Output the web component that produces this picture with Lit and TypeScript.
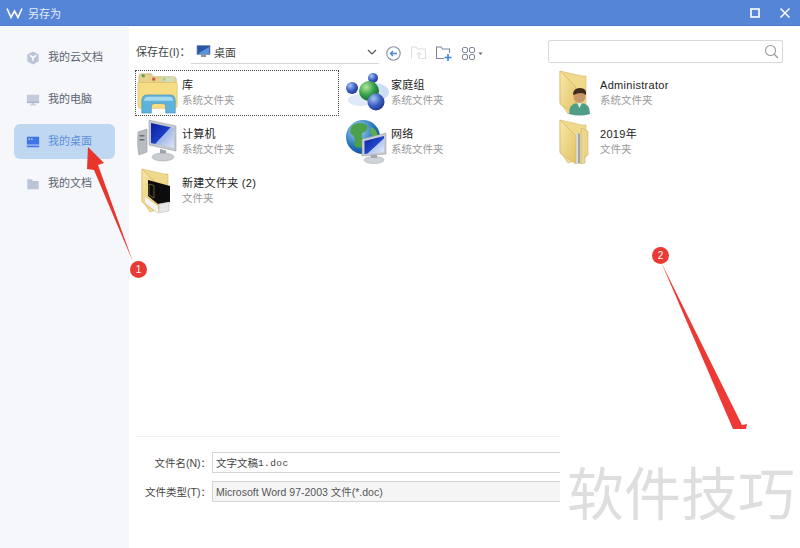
import { LitElement, html, css, svg } from "lit";
import { customElement } from "lit/decorators.js";

const folderBase = (inner: unknown) => svg`
  <svg class="ico" viewBox="0 0 46 46">
    <defs><linearGradient id="fg" x1="0" y1="0" x2="1" y2="1"><stop offset="0" stop-color="#f8e8a8"/><stop offset="1" stop-color="#e2c268"/></linearGradient></defs>
    <path d="M6 1 L28 6 H32 V38 L14 44 L6 32 Z" fill="#f0d98c" stroke="#d3b868" stroke-width=".6"/>
    <path d="M6 1 L22 17 V45 L6 34 Z" fill="url(#fg)" stroke="#cdb062" stroke-width=".6"/>
    ${inner}
  </svg>`;

const icons: Record<string, unknown> = {
  lib: svg`<svg class="ico" viewBox="0 0 46 46">
    <path d="M2 6 Q2 3 5 3 H15 L17 6 H38 Q41 6 41 9 V14 H2 Z" fill="#e6d28c" stroke="#b9a55e" stroke-width=".6"/>
    <rect x="5" y="3.500" width="3" height="3" fill="#5d9b52"/><rect x="16" y="7" width="3" height="3" fill="#d2503c"/><rect x="27" y="7" width="3" height="3" fill="#5d9b52"/>
    <rect x="26" y="6" width="14" height="6" rx="1" fill="#cfe0c4" opacity=".7"/>
    <path d="M1 12 H41 Q42 12 42 14 V36 Q42 39 39 39 H4 Q1 39 1 36 Z" fill="#f6dc82" stroke="#d4b660" stroke-width=".6"/>
    <path d="M5 44 V31 Q5 25 11 25 H35 Q40 25 40 31 V44 H30 V37 Q30 34 27 34 H18 Q15 34 15 37 V44 Z" fill="#5db3dc" stroke="#3f8fb8" stroke-width=".6"/>
    <path d="M7 33 Q7 27 12 27 H33 Q38 27 38 31 H7 Z" fill="#a5d9ee"/>
  </svg>`,
  homegroup: svg`<svg class="ico" viewBox="0 0 46 46">
    <defs>
      <radialGradient id="gb" cx=".35" cy=".3" r=".8"><stop offset="0" stop-color="#a8c4f0"/><stop offset=".55" stop-color="#3a5cc0"/><stop offset="1" stop-color="#1c2f80"/></radialGradient>
      <radialGradient id="gg" cx=".35" cy=".3" r=".8"><stop offset="0" stop-color="#b0e89a"/><stop offset=".55" stop-color="#2f9a46"/><stop offset="1" stop-color="#0e5c2a"/></radialGradient>
    </defs>
    <ellipse cx="30" cy="22" rx="14" ry="9" fill="#cfdcf5"/>
    <ellipse cx="16" cy="30" rx="13" ry="6" fill="#dfe8f8"/>
    <circle cx="28" cy="8" r="5" fill="url(#gb)"/>
    <circle cx="7" cy="18" r="6" fill="url(#gb)"/>
    <circle cx="24" cy="21" r="10" fill="url(#gg)"/>
    <circle cx="31" cy="32" r="8.500" fill="url(#gb)"/>
  </svg>`,
  user: folderBase(svg`
    <path d="M15 44 Q15 33 24 33 H27 Q36 33 36 44 Q26 47 15 44 Z" fill="#4f9d86"/>
    <path d="M23 33 L25.500 38 L28 33 Z" fill="#d9efe4"/>
    <ellipse cx="25.500" cy="26" rx="6" ry="7" fill="#c9966a"/>
    <path d="M19 25 Q19 18 26 18 Q33 18 32 25 Q28 21 19 25 Z" fill="#3d2a1c"/>`),
  computer: svg`<svg class="ico" viewBox="0 0 46 46">
    <defs><linearGradient id="sc" x1="0" y1="0" x2="1" y2="1"><stop offset="0" stop-color="#0a1f9c"/><stop offset=".5" stop-color="#1c3fc6"/><stop offset=".52" stop-color="#9db6e6"/><stop offset="1" stop-color="#dfe8f8"/></linearGradient></defs>
    <path d="M2 13 L11 10 V33 L3 36 Q1 30 2 13 Z" fill="#b8bcc2" stroke="#8b8f96" stroke-width=".5"/>
    <rect x="3.500" y="16" width="5" height="1.500" fill="#6b7077"/><rect x="3.500" y="20" width="5" height="1.500" fill="#6b7077"/>
    <path d="M13 1 L40 7 V32 L13 26 Z" fill="#c4c9d0" stroke="#8f949c" stroke-width=".5"/>
    <path d="M15 4 L38 9 V29 L15 24 Z" fill="url(#sc)"/>
    <path d="M24 30 L30 31.500 V36 H24 Z" fill="#9ea3aa"/>
    <ellipse cx="27" cy="38" rx="11" ry="4" fill="#c9cdd2" stroke="#9a9ea5" stroke-width=".5"/>
  </svg>`,
  network: svg`<svg class="ico" viewBox="0 0 46 46">
    <defs>
      <radialGradient id="gl" cx=".35" cy=".3" r=".85"><stop offset="0" stop-color="#a9dcf2"/><stop offset=".6" stop-color="#1f6fb8"/><stop offset="1" stop-color="#0d3f80"/></radialGradient>
      <linearGradient id="sn" x1="0" y1="0" x2="1" y2="1"><stop offset="0" stop-color="#0a1f9c"/><stop offset=".55" stop-color="#2448c9"/><stop offset=".58" stop-color="#b5c9ee"/><stop offset="1" stop-color="#e4ecf9"/></linearGradient>
    </defs>
    <circle cx="18" cy="18" r="17" fill="url(#gl)"/>
    <path d="M8 6 Q15 2 22 6 Q24 12 17 14 Q16 22 20 26 Q14 32 9 26 Q12 18 6 15 Q4 10 8 6 Z" fill="#4da04a"/>
    <path d="M26 8 Q32 10 33 18 L27 17 Q24 12 26 8 Z" fill="#5cab4d"/>
    <path d="M17 20 L41 14 V35 L17 37 Z" fill="#c7ccd3" stroke="#8d929a" stroke-width=".5"/>
    <path d="M19.500 22 L39 17 V33 L19.500 35 Z" fill="url(#sn)"/>
    <ellipse cx="29" cy="41" rx="10" ry="3.500" fill="#cfd2d7" stroke="#a3a7ad" stroke-width=".5"/>
    <path d="M26 36 H32 V39 H26 Z" fill="#a4a8ae"/>
  </svg>`,
  year: folderBase(svg`
    <path d="M22 14 L27 17 V45 L22 45 Z" fill="#d8d8d2"/>
    <path d="M24 14 L26 15 V44 L24 44 Z" fill="#a5a69f"/>
    <path d="M27 9 L34 12 V36 L31 37 V44 L27 45 Z" fill="#eed58c" stroke="#c4a85c" stroke-width=".5"/>`),
  newf: folderBase(svg`
    <path d="M12 12 L34 18 V34 L22 36 L12 28 Z" fill="#0c0c0c"/>
    <path d="M9 29 L22 38 V45 L9 35 Z" fill="#f4f4f4"/>
    <path d="M23 36 L33 34 V43 L23 45 Z" fill="#e6e6e6" stroke="#aaa" stroke-width=".4"/>
    <path d="M13 16 L18 17.500 V30 L13 27 Z" fill="none" stroke="#8a7a3c" stroke-width=".7"/>`),
};

const side = [
  { t: "我的云文档", i: svg`<svg viewBox="0 0 16 16"><path d="M8 0.500 L14.500 4 V12 L8 15.500 L1.500 12 V4 Z" fill="#bcc5d8"/><path d="M4.500 5 L8 7.500 L11.500 5 M8 7.500 V11" stroke="#fff" stroke-width="1.700" fill="none"/></svg>` },
  { t: "我的电脑", i: svg`<svg viewBox="0 0 16 16"><rect x="1" y="2" width="14" height="9.500" fill="#c3cbdc"/><rect x="1" y="9.500" width="14" height="2" fill="#aeb7cc"/><rect x="6.500" y="11.500" width="3" height="2" fill="#c3cbdc"/><rect x="4.500" y="13" width="7" height="1.200" fill="#c3cbdc"/></svg>` },
  { t: "我的桌面", active: true, i: svg`<svg viewBox="0 0 16 16"><rect x="1" y="2" width="14" height="12" fill="#3f76e4"/><rect x="3" y="4" width="1.500" height="1.500" fill="#dbe6fb"/><rect x="6" y="4" width="1.500" height="1.500" fill="#dbe6fb"/><rect x="1" y="11" width="14" height="1" fill="#dbe6fb"/></svg>` },
  { t: "我的文档", i: svg`<svg viewBox="0 0 16 16"><path d="M1.500 2.500 H6.500 L8 4.500 H14.500 V14 H1.500 Z" fill="#bcc5d8"/></svg>` },
];

const files = [
  { k: "lib", n: "库", d: "系统文件夹", sel: true },
  { k: "homegroup", n: "家庭组", d: "系统文件夹" },
  { k: "user", n: "Administrator", d: "系统文件夹" },
  { k: "computer", n: "计算机", d: "系统文件夹" },
  { k: "network", n: "网络", d: "系统文件夹" },
  { k: "year", n: "2019年", d: "文件夹" },
  { k: "newf", n: "新建文件夹 (2)", d: "文件夹" },
];

@customElement("app-root")
export class AppRoot extends LitElement {
  static styles = css`
    :host {
      display: block; width: 800px; height: 548px; position: relative; overflow: hidden; background: #fff;
      font-family: "Liberation Sans", "Noto Sans CJK SC", sans-serif; font-size: 11px; color: #333;
    }
    .title { height: 26px; background: #5585d6; border-bottom: 1px solid #4f7cc8; box-sizing: border-box; display: flex; align-items: center; padding: 0 9px 0 6px; color: #e8eefa; gap: 5px; }
    .title .logo { width: 17px; height: 12px; }
    .title .name { flex: 1; font-size: 11px; }
    .title .ctl { width: 12px; height: 12px; margin-left: 13px; display: block; }
    .body { display: flex; height: 522px; }
    .side { width: 129px; background: #f5f7fb; padding-top: 14px; box-sizing: border-box; flex: none; }
    .nav { width: 101px; height: 35px; margin: 0 0 7px 14px; border-radius: 6px; display: flex; align-items: center; gap: 8px; padding: 0 0 4px 12px; box-sizing: border-box; color: #5b6370; font-size: 11px; }
    .nav svg { width: 14px; height: 14px; flex: none; margin-top: 4px; }
    .nav.active { background: #c0d7f2; color: #5b8fd8; }
    .main { flex: 1; display: flex; flex-direction: column; min-width: 0; }
    .toolbar { height: 44px; display: flex; align-items: center; padding: 6px 0 0 7px; box-sizing: border-box; }
    .lbl { font-size: 11px; color: #444; width: 55px; flex: none; }
    .path { width: 188px; height: 22px; border-bottom: 1px solid #d6d6d6; display: flex; align-items: center; gap: 3px; margin-top: 4px; padding: 0 0 2px 5px; box-sizing: border-box; color: #444; flex: none; }
    .path .mon { width: 15px; height: 13px; }
    .path span { flex: 1; }
    .path .chev { width: 10px; height: 6px; margin-right: 2px; }
    .tools { display: flex; align-items: center; gap: 10px; margin-left: 7px; margin-top: 4px; }
    .tools svg { display: block; }
    .search { margin-left: 65px; width: 235px; height: 23px; border: 1px solid #d9d9d9; border-radius: 2px; box-sizing: border-box; display: flex; align-items: center; justify-content: flex-end; padding-right: 3px; margin-top: 1px; flex: none; }
    .search svg { width: 15px; height: 15px; }
    .grid { display: grid; grid-template-columns: 209px 209px 200px; grid-auto-rows: 49px; margin-left: 6px; height: 366px; align-content: start; }
    .item { display: flex; align-items: center; height: 46px; box-sizing: border-box; padding-left: 1px; }
    .item.sel { border: 1px dotted #444; width: 204px; padding-left: 0; }
    .ico { width: 46px; height: 46px; flex: none; }
    .item.sel .ico { width: 46px; height: 44px; }
    .item .txt { display: flex; flex-direction: column; gap: 2px; line-height: 13px; }
    .item .n { color: #222; font-size: 11px; letter-spacing: .3px; }
    .item .d { color: #999; font-size: 10.500px; }
    .foot { border-top: 1px solid #eef0f3; margin-left: 7px; padding-top: 15px; flex: 1; display: flex; flex-direction: column; gap: 8px; }
    .row { display: flex; align-items: center; }
    .row label { width: 75px; text-align: right; font-size: 10.500px; color: #444; flex: none; white-space: nowrap; }
    .fld { width: 400px; height: 21px; border: 1px solid #d4d4d4; margin-left: 1px; display: flex; align-items: center; padding-left: 3px; box-sizing: border-box; font-size: 10.500px; color: #444; white-space: nowrap; }
    .fld.sel { background: #f5f5f5; color: #555; }
    .fld .m { font-family: "Liberation Mono", monospace; font-size: 9.500px; margin-top: 2px; letter-spacing: .4px; }
    .over { position: absolute; left: 0; top: 0; width: 800px; height: 548px; pointer-events: none; }
    .wm { position: absolute; left: 560px; top: 429px; width: 240px; height: 119px; background: #fff; box-sizing: border-box; padding: 0 0 0 7px; font-size: 57px; line-height: 122px; color: #dedede; letter-spacing: 0; white-space: nowrap; overflow: hidden; font-family: "Noto Sans CJK SC", sans-serif; font-weight: 400; }
    .badge { position: absolute; width: 17px; height: 17px; border-radius: 50%; background: #e93a36; color: #fff; font-size: 10px; line-height: 17px; text-align: center; }
  `;

  render() {
    return html`
      <div class="title">
        <svg class="logo" viewBox="0 0 17 12"><path d="M1 1.500 L5 10.500 L8.500 4 L12 10.500 L16 1.500" fill="none" stroke="#fff" stroke-width="1.600"/></svg>
        <span class="name">另存为</span>
        <svg class="ctl" viewBox="0 0 12 12"><rect x="2" y="2" width="8" height="8" fill="none" stroke="#fff" stroke-width="1.600"/></svg>
        <svg class="ctl" viewBox="0 0 12 12"><path d="M1.500 1.500 L10.500 10.500 M10.500 1.500 L1.500 10.500" stroke="#fff" stroke-width="1.500"/></svg>
      </div>
      <div class="body">
        <div class="side">
          ${side.map((s) => html`<div class="nav ${s.active ? "active" : ""}">${s.i}<span>${s.t}</span></div>`)}
        </div>
        <div class="main">
          <div class="toolbar">
            <span class="lbl">保存在(I)：</span>
            <div class="path">
              <svg class="mon" viewBox="0 0 15 13"><rect x="1" y="0.500" width="13" height="9" fill="#2a56a8" stroke="#7d8ca5" stroke-width=".6"/><path d="M3 8 L13 2 V9 H3 Z" fill="#5a94d8"/><rect x="5" y="10" width="5" height="2" fill="#8a93a3"/></svg>
              <span>桌面</span>
              <svg class="chev" viewBox="0 0 10 6"><path d="M1 1 L5 5 L9 1" fill="none" stroke="#555" stroke-width="1.200"/></svg>
            </div>
            <div class="tools">
              <svg width="15" height="15" viewBox="0 0 15 15"><circle cx="7.500" cy="7.500" r="6.700" fill="none" stroke="#8a94a8" stroke-width="1.100"/><path d="M11 7.500 H4.500 M7 5 L4.500 7.500 L7 10" fill="none" stroke="#4a86d8" stroke-width="1.300"/></svg>
              <svg width="15" height="14" viewBox="0 0 15 14"><path d="M.5 12.500 V1 H5 L6.500 3 H14.500 V12.500 H10" fill="none" stroke="#d8dbe0"/><path d="M8 13 V7 M5.500 9 L8 6.500 L10.500 9" fill="none" stroke="#d0d4da"/></svg>
              <svg width="16" height="15" viewBox="0 0 16 15"><path d="M8 12.500 H.5 V1 H5 L6.500 3 H13.500 V7" fill="none" stroke="#7d8799" stroke-width="1.100"/><path d="M12 8 V15 M8.500 11.500 H15.500" stroke="#3f82dc" stroke-width="1.600"/></svg>
              <svg width="21" height="13" viewBox="0 0 21 13"><g fill="none" stroke="#7d8799"><rect x=".5" y=".5" width="5" height="5" rx="1.500"/><rect x="7.500" y=".5" width="5" height="5" rx="1.500"/><rect x=".5" y="7.500" width="5" height="5" rx="1.500"/><rect x="7.500" y="7.500" width="5" height="5" rx="1.500"/></g><path d="M16.500 5.500 H20.500 L18.500 8 Z" fill="#666"/></svg>
            </div>
            <div class="search">
              <svg viewBox="0 0 15 15"><circle cx="6.500" cy="6.500" r="5" fill="none" stroke="#9a9a9a" stroke-width="1.100"/><path d="M10.200 10.200 L14 14" stroke="#9a9a9a" stroke-width="1.300"/></svg>
            </div>
          </div>
          <div class="grid">
            ${files.map((f) => html`
              <div class="item ${f.sel ? "sel" : ""}">
                ${icons[f.k]}
                <div class="txt"><span class="n">${f.n}</span><span class="d">${f.d}</span></div>
              </div>`)}
          </div>
          <div class="foot">
            <div class="row"><label>文件名(N)：</label><div class="fld">文字文稿<span class="m">1.doc</span></div></div>
            <div class="row"><label>文件类型(T)：</label><div class="fld sel">Microsoft Word 97-2003 文件(*.doc)</div></div>
          </div>
        </div>
      </div>
      <svg class="over" viewBox="0 0 800 548">
        <path d="M88 147 L104 163 L98 165 L133 262 L94 170 L87 169 Z" fill="#e9362c"/>
        <path d="M661 262 L742 425 L747 424 L746 429 L733 429 Z" fill="#ee3a35"/>
      </svg>
      <div class="badge" style="left:130px;top:261px">1</div>
      <div class="badge" style="left:652px;top:247px">2</div>
      <div class="wm">软件技巧</div>
    `;
  }
}
